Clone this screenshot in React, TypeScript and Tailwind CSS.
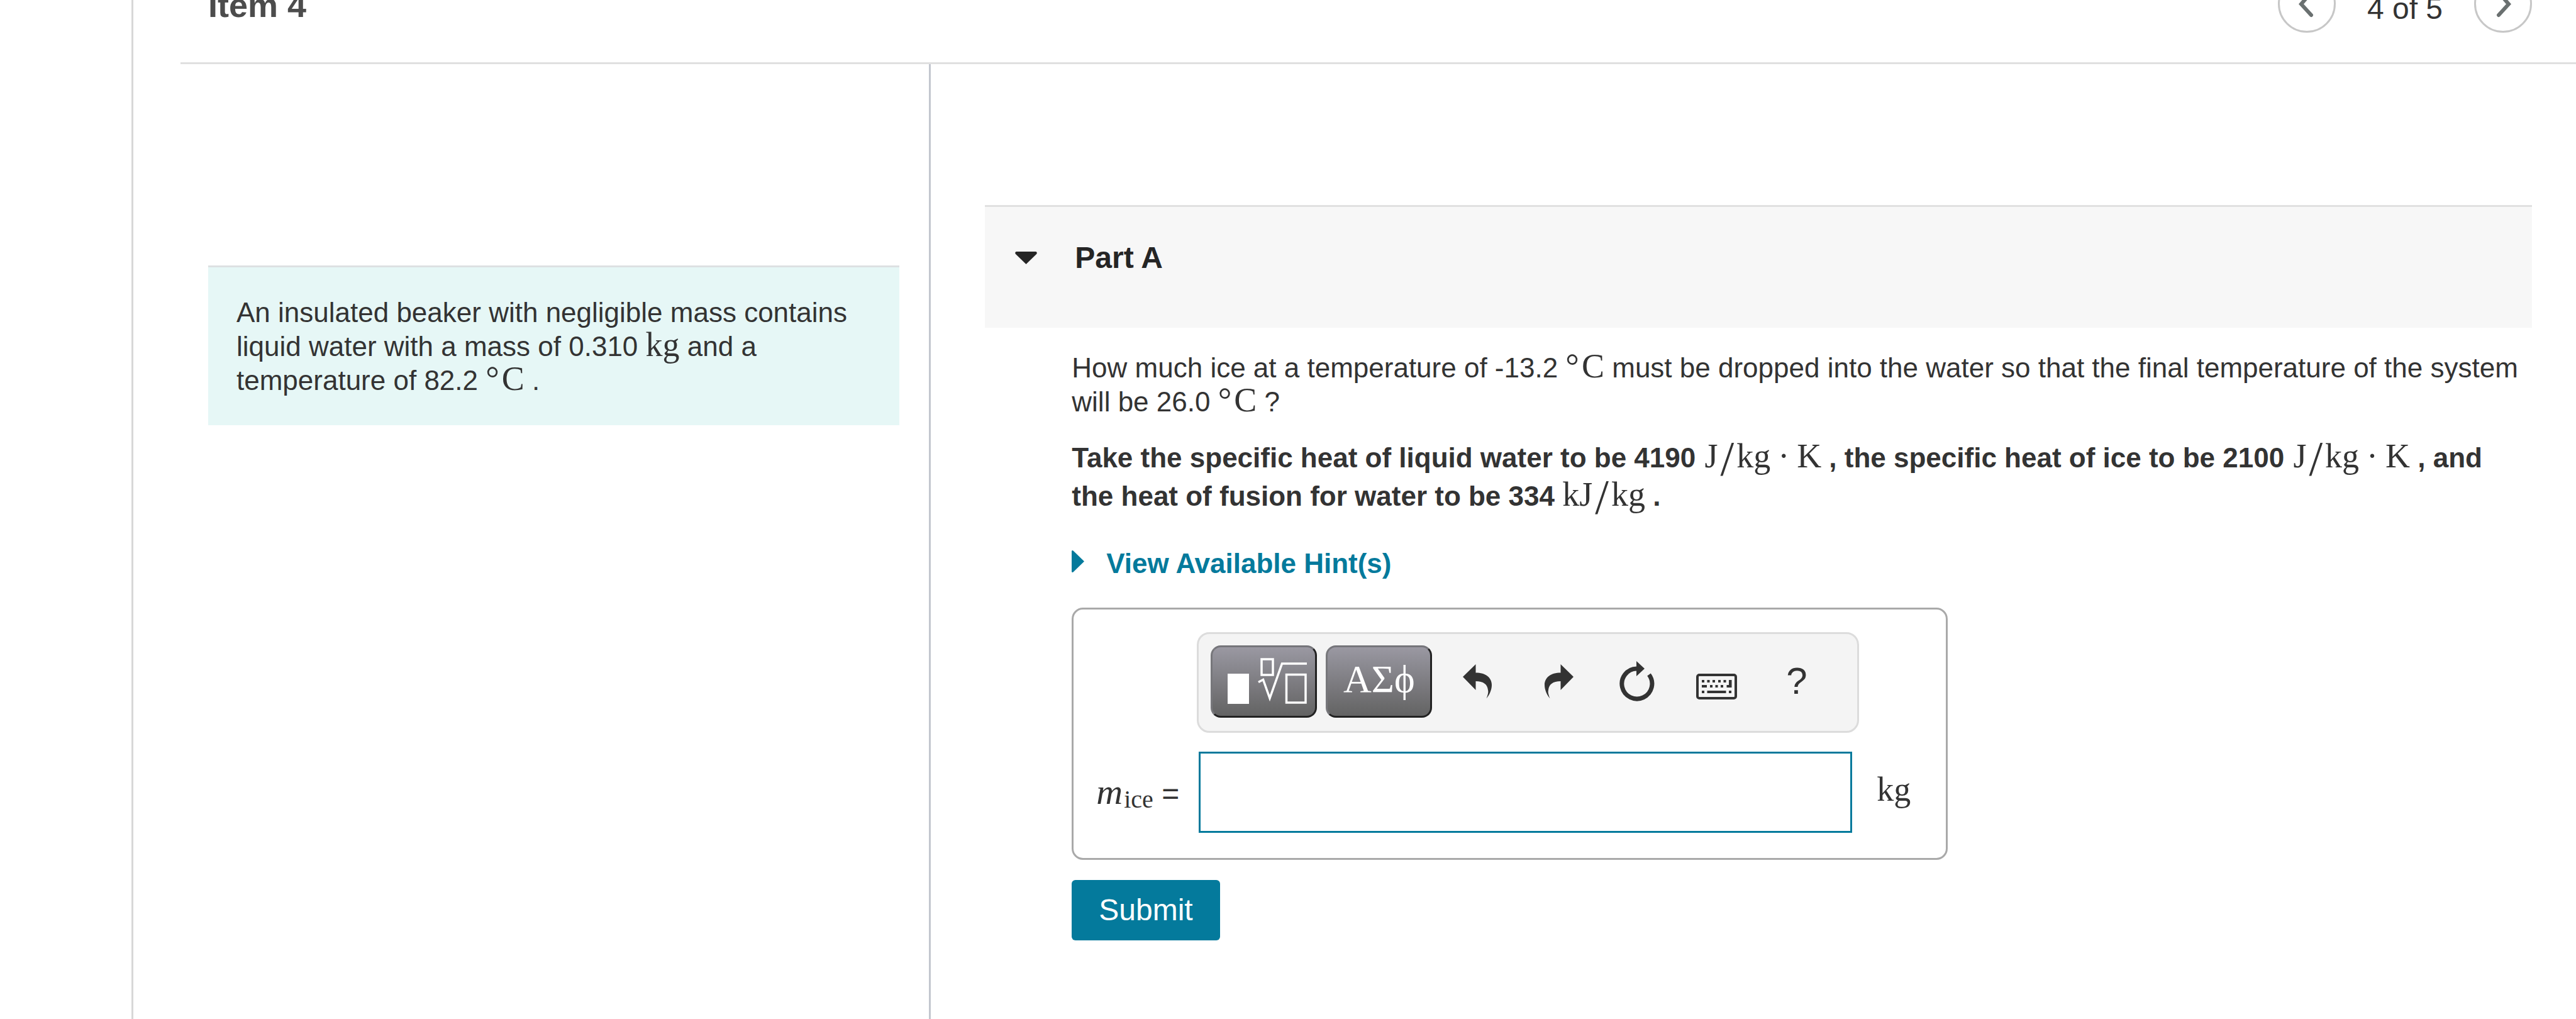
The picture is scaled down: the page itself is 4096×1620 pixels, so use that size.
import { useState } from 'react';
import type { ReactNode } from 'react';

function Units({ children }: { children: ReactNode }) {
  return (
    <span className="font-['Liberation_Serif',serif] text-[54px] leading-10 font-normal whitespace-nowrap">
      {children}
    </span>
  );
}

function Celsius() {
  return (
    <Units>
      <span className="mr-1">°</span>C
    </Units>
  );
}

function Slash() {
  return <span className="mx-1 align-[-12px] text-[78px] leading-10">/</span>;
}

function PerKgKelvin() {
  return (
    <Units>
      <span className="ml-[2px]">J</span>
      <Slash />kg<span className="mx-3">·</span>K
    </Units>
  );
}

function Chevron({ direction }: { direction: 'left' | 'right' }) {
  return (
    <svg width="30" height="48" viewBox="0 0 30 48" fill="none" stroke="#6a7070" strokeWidth="6" strokeLinecap="round">
      {direction === 'left' ? <path d="M22 6 6 24.500 22 42" /> : <path d="M8 6 24 24.500 8 42" />}
    </svg>
  );
}

function TemplateIcon() {
  return (
    <svg width="137" height="74" viewBox="0 0 137 74" fill="none" stroke="#fff">
      <rect x="11" y="25" width="34" height="48" fill="#fff" stroke="none" />
      <rect x="65" y="2" width="18" height="25" strokeWidth="3.500" />
      <path d="M60 38.500 67.500 34.500 78 64 97.500 9H137" strokeWidth="3.500" />
      <rect x="104.500" y="26.500" width="30.500" height="44.500" strokeWidth="3.500" />
    </svg>
  );
}

function UndoIcon() {
  return (
    <svg width="46" height="55" viewBox="0 0 46 55" fill="currentColor">
      <path d="M0 20 20.500 0V13.500C36 13.500 46 21 46 33 46 41 42 49 37.500 54.500 39.500 49 41 45 40 41 39 32 33 27 20.500 27V41Z" />
    </svg>
  );
}

function RedoIcon() {
  return (
    <svg width="52" height="55" viewBox="0 0 52 55" fill="currentColor">
      <path d="M52 20 31.500 0V13.500C16 13.500 6 21 6 33 6 41 10 49 14.500 54.500 12.500 49 11 45 12 41 13 32 19 27 31.500 27V41Z" />
    </svg>
  );
}

function ResetIcon() {
  return (
    <svg width="57" height="64" viewBox="0 0 57 64" fill="none">
      <path d="M48 21.500A24 24 0 1 1 28.400 12" stroke="currentColor" strokeWidth="7" />
      <path d="M28 0 41 12 28 24Z" fill="currentColor" />
    </svg>
  );
}

function KeyboardIcon() {
  return (
    <svg width="65" height="57" viewBox="0 0 65 57" fill="currentColor">
      <rect x="2" y="18" width="61" height="37" rx="3" fill="none" stroke="currentColor" strokeWidth="4" />
      <path d="M9 26h4v4H9zM17.500 26h4v4h-4zM26 26h4v4h-4zM35 26h4v4h-4zM43.500 26h4v4h-4zM52 26h4.500v12H48.500v-4H52z" />
      <path d="M9 34h8v4H9zM22 34h4v4h-4zM30.500 34h4v4h-4zM39 34h4v4h-4zM9 43h4v4H9zM17.500 43h30v4h-30zM52 43h4v4h-4z" />
    </svg>
  );
}

const paletteButton =
  "flex h-[115px] w-[169px] items-center justify-center rounded-2xl border-[3px] border-t-[#75757a] border-l-[#77777b] border-r-[#222] border-b-[#222] bg-linear-to-b from-[#9a98a2] to-[#636363] text-white";

const tools = [
  { label: 'Undo', icon: <UndoIcon /> },
  { label: 'Redo', icon: <RedoIcon /> },
  { label: 'Reset', icon: <ResetIcon /> },
  { label: 'Keyboard shortcuts', icon: <KeyboardIcon /> },
  { label: 'Help', icon: <span className="text-[60px]">?</span> },
];

function Toolbar() {
  return (
    <div className="flex h-40 items-center rounded-[20px] border-[3px] border-[#dcdcdc] bg-[#f4f4f4] pb-1 pl-[19px] text-[#333]">
      <button type="button" aria-label="Templates" className={paletteButton}>
        <TemplateIcon />
      </button>
      <button
        type="button"
        aria-label="Symbols"
        className={`${paletteButton} ml-[14px] pb-2 font-['Liberation_Serif',serif] text-[62px]`}
      >
        ΑΣϕ
      </button>
      <div className="ml-2 flex">
        {tools.map((tool) => (
          <button key={tool.label} type="button" aria-label={tool.label} className="flex h-24 w-[127px] items-center justify-center">
            {tool.icon}
          </button>
        ))}
      </div>
    </div>
  );
}

export default function App() {
  const [answer, setAnswer] = useState('');

  return (
    <div className="flex min-h-screen overflow-hidden bg-white pl-[209px] font-['Liberation_Sans',Arial,sans-serif] text-[44px] leading-[54px] text-[#333]">
      <div className="flex grow flex-col border-l-[3px] border-[#d8d8d8] pl-[75px]">
        {/* item header, scrolled partly out of view */}
        <header className="-mt-10 flex h-[142px] items-start justify-between border-b-[3px] border-[#e0e0e0] pr-[70px] pl-[44px]">
          <h1 className="flex h-[92px] items-center pt-1 text-[54px] font-bold text-[#4c4c4c]">Item 4</h1>
          <nav className="flex h-[92px] items-center gap-[50px] text-[48px]">
            <button
              type="button"
              aria-label="Previous item"
              className="flex size-[92px] items-center justify-center rounded-full border-[3px] border-[#c7c7c7]"
            >
              <Chevron direction="left" />
            </button>
            <span className="pt-4">4 of 5</span>
            <button
              type="button"
              aria-label="Next item"
              className="flex size-[92px] items-center justify-center rounded-full border-[3px] border-[#c7c7c7]"
            >
              <Chevron direction="right" />
            </button>
          </nav>
        </header>

        <div className="grid grow grid-cols-[5fr_11fr]">
          {/* problem statement */}
          <aside className="pt-80 pr-[47px] pl-[44px]">
            <p className="border-t-[3px] border-[#dde0e2] bg-[#e6f7f6] px-[45px] pt-[45px] pb-[44px]">
              An insulated beaker with negligible mass contains liquid water with a mass of 0.310 <Units>kg</Units> and a
              temperature of 82.2 <Celsius /> .
            </p>
          </aside>

          <main className="border-l-[3px] border-[#c3c7cf] pt-56 pr-[70px] pl-[86px]">
            <h2 className="border-t-[3px] border-[#e0e0e0] bg-[#f7f7f7] pt-[54px] pb-[84px] pl-12 text-[48px] font-bold text-[#252525]">
              <button type="button" aria-expanded="true" className="flex items-center gap-[60px]">
                <svg width="35" height="20" viewBox="0 0 35 20" fill="currentColor">
                  <path d="M2 0H33Q36 1 34 4L17.500 20 1 4Q-1 1 2 0Z" />
                </svg>
                Part A
              </button>
            </h2>

            <div className="pt-[37px] pr-3 pl-[138px]">
              <p>
                How much ice at a temperature of -13.2 <Celsius /> must be dropped into the water so that the final
                temperature of the system will be 26.0 <Celsius /> ?
              </p>
              <p className="mt-[31px] leading-[61px] font-bold">
                Take the specific heat of liquid water to be 4190 <PerKgKelvin /> , the specific heat of ice to be 2100{' '}
                <PerKgKelvin /> , and the heat of fusion for water to be 334{' '}
                <Units>
                  kJ<Slash />kg
                </Units>{' '}
                .
              </p>

              <button type="button" className="mt-[50px] flex items-center gap-[35px] font-bold text-[#047a9c]">
                <svg width="20" height="43" viewBox="0 0 20 43" fill="currentColor">
                  <path d="M0 1Q1 -1 3 1L20 17.500 3 34Q1 36 0 34Z" />
                </svg>
                View Available Hint(s)
              </button>

              <form onSubmit={(e) => e.preventDefault()}>
                <div className="mt-[43px] grid w-fit grid-cols-[160px_1053px_auto] items-center gap-y-[30px] rounded-[18px] border-[3px] border-[#a9a9a9] pt-9 pr-14 pb-10 pl-9">
                  <div className="col-start-2">
                    <Toolbar />
                  </div>
                  <label htmlFor="mass" className="col-start-1 pt-1 text-[48px] whitespace-nowrap">
                    <span className="font-['Liberation_Serif',serif] text-[58px] italic">m</span>
                    <sub className="bottom-0 ml-[2px] align-[-6px] font-['Liberation_Serif',serif] text-[40px] leading-10">ice</sub> =
                  </label>
                  <input
                    id="mass"
                    type="text"
                    value={answer}
                    onChange={(e) => setAnswer(e.target.value)}
                    className="ml-[3px] h-[129px] w-[1039px] border-[3px] border-[#047a9c] px-5 outline-none"
                  />
                  <span className="pb-1 pl-7">
                    <Units>kg</Units>
                  </span>
                </div>

                <button type="submit" className="mt-8 h-24 rounded-md bg-[#047a9c] px-[43px] text-[48px] text-white">
                  Submit
                </button>
              </form>
            </div>
          </main>
        </div>
      </div>
    </div>
  );
}
